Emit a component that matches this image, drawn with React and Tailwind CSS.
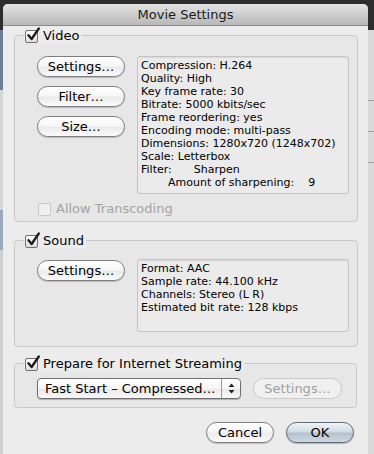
const font = { fontFamily: '"DejaVu Sans", "Liberation Sans", sans-serif' };

function CheckBox({ checked = true, disabled = false }) {
  return (
    <span className="relative inline-block w-[14px] h-[14px] shrink-0">
      <span
        className={`absolute left-0 top-[1px] w-[13px] h-[13px] rounded-[2px] border ${
          disabled
            ? "border-[#c8c8c8] bg-[#f0f0f0]"
            : "border-[#707070] bg-[linear-gradient(to_bottom,#ffffff,#dedede)]"
        }`}
      />
      {checked && (
        <svg
          className="absolute left-[1px] top-[-2px]"
          width="15"
          height="15"
          viewBox="0 0 15 15"
        >
          <path
            d="M2.5 8.2 L5.6 12 L12.8 1.5"
            fill="none"
            stroke="#1c1c1c"
            strokeWidth="2.3"
            strokeLinecap="round"
            strokeLinejoin="round"
          />
        </svg>
      )}
    </span>
  );
}

function AquaButton({ children, className = "", def = false, disabled = false }) {
  const look = disabled
    ? "border-[#c9c9c9] text-[#a0a0a0] bg-[#f0f0f0]"
    : def
    ? "border-[#5d6a78] text-black bg-[linear-gradient(to_bottom,#f1f4f7_0%,#d3dbe3_45%,#b6c2ce_55%,#cfd9e2_100%)] shadow-[0_1px_1px_rgba(0,0,0,0.25)]"
    : "border-[#7e7e7e] text-black bg-[linear-gradient(to_bottom,#ffffff_0%,#f7f7f7_45%,#ebebeb_55%,#fbfbfb_100%)] shadow-[0_1px_1px_rgba(0,0,0,0.2)]";
  return (
    <div
      className={`h-[21px] rounded-full border flex items-center justify-center text-[13px] leading-none ${look} ${className}`}
    >
      {children}
    </div>
  );
}

function InfoBox({ children, className = "" }) {
  return (
    <div
      className={`border border-[#c4c4c4] rounded-[3px] bg-[#ebebeb] shadow-[inset_0_1px_1px_rgba(0,0,0,0.08)] pl-[3px] pt-[2px] text-[11px] leading-[13px] text-black ${className}`}
    >
      {children}
    </div>
  );
}

function Group({ label, children, className = "" }) {
  return (
    <fieldset
      className={`border border-[#c9c9c9] rounded-[4px] bg-[#e7e7e7] ${className}`}
    >
      <legend className="ml-[9px] px-[1px] flex items-center gap-[4px] bg-[#ececec] text-[13px] leading-[15px] text-black">
        <CheckBox />
        <span className="pr-[1px]">{label}</span>
      </legend>
      {children}
    </fieldset>
  );
}

export default function App() {
  return (
    <div
      className="w-[374px] h-[454px] overflow-hidden flex bg-[#2d2d2d]"
      style={font}
    >
      <div className="w-[3px] flex flex-col pt-[30px]">
        <div className="h-[60px] bg-[#6b7f9a]" />
        <div className="h-[120px] bg-[#d6d6d6]" />
        <div className="h-[40px] bg-[#9aa9bd]" />
        <div className="flex-1 bg-[#cfcfcf]" />
      </div>
      <div className="w-[365px] mt-[4px] rounded-t-[5px] overflow-hidden flex flex-col bg-[#ececec]">
        <div className="h-[22px] shrink-0 border-b border-[#8c8c8c] bg-[linear-gradient(to_bottom,#e4e4e4,#b8b8b8)] flex items-center justify-center text-[13px] text-[#1a1a1a]">
          Movie Settings
        </div>
        <div className="px-[11px] flex flex-col">
          <Group label="Video" className="mt-[2px] h-[194px]">
            <div className="pl-[22px] pr-[8px] pt-[13px] flex gap-[12px]">
              <div className="w-[88px] flex flex-col gap-[9px]">
                <AquaButton>Settings…</AquaButton>
                <AquaButton>Filter…</AquaButton>
                <AquaButton>Size…</AquaButton>
              </div>
              <InfoBox className="w-[212px] h-[138px]">
                <div>Compression: H.264</div>
                <div>Quality: High</div>
                <div>Key frame rate: 30</div>
                <div>Bitrate: 5000 kbits/sec</div>
                <div>Frame reordering: yes</div>
                <div>Encoding mode: multi-pass</div>
                <div>Dimensions: 1280x720 (1248x702)</div>
                <div>Scale: Letterbox</div>
                <div>
                  Filter:<span className="ml-[22px]">Sharpen</span>
                </div>
                <div className="pl-[27px]">
                  Amount of sharpening:<span className="ml-[14px]">9</span>
                </div>
              </InfoBox>
            </div>
            <div className="pl-[23px] mt-[5px] flex items-center gap-[4px] text-[13px] text-[#a3a3a3]">
              <CheckBox checked={false} disabled />
              <span>Allow Transcoding</span>
            </div>
          </Group>

          <Group label="Sound" className="mt-[11px] h-[114px]">
            <div className="pl-[22px] pr-[8px] pt-[11px] flex gap-[12px] items-start">
              <AquaButton className="w-[88px] mt-[1px]">Settings…</AquaButton>
              <InfoBox className="w-[212px] h-[73px]">
                <div>Format: AAC</div>
                <div>Sample rate: 44.100 kHz</div>
                <div>Channels: Stereo (L R)</div>
                <div>Estimated bit rate: 128 kbps</div>
              </InfoBox>
            </div>
          </Group>

          <Group label="Prepare for Internet Streaming" className="mt-[9px] h-[52px]">
            <div className="pl-[22px] pt-[7px] flex items-center gap-[12px]">
              <div className="w-[204px] h-[21px] rounded-[4px] border border-[#6f6f6f] bg-[linear-gradient(to_bottom,#ffffff_0%,#f6f6f6_50%,#e9e9e9_55%,#f8f8f8_100%)] shadow-[0_1px_1px_rgba(0,0,0,0.25)] flex items-center text-[13px]">
                <span className="flex-1 pl-[7px]">Fast Start – Compressed…</span>
                <span className="w-[19px] h-full border-l border-[#9a9a9a] flex items-center justify-center">
                  <svg width="7" height="11" viewBox="0 0 7 11">
                    <path d="M3.5 0.5 L6.5 4 L0.5 4 Z" fill="#222" />
                    <path d="M3.5 10.5 L6.5 7 L0.5 7 Z" fill="#222" />
                  </svg>
                </span>
              </div>
              <AquaButton disabled className="w-[89px]">
                Settings…
              </AquaButton>
            </div>
          </Group>

          <div className="flex justify-end gap-[12px] pr-[3px] mt-[14px]">
            <AquaButton className="w-[68px] h-[20px]">Cancel</AquaButton>
            <AquaButton def className="w-[68px] h-[20px]">
              OK
            </AquaButton>
          </div>
        </div>
      </div>
      <div className="flex-1 flex flex-col">
        <div className="h-[30px] bg-[#2d2d2d]" />
        <div className="flex-1 bg-[#d9d9d9] flex flex-col gap-[30px] pt-[70px]">
          <div className="h-px bg-[#a0a0a0]" />
          <div className="h-px bg-[#a0a0a0]" />
          <div className="h-px bg-[#a0a0a0]" />
        </div>
      </div>
    </div>
  );
}
